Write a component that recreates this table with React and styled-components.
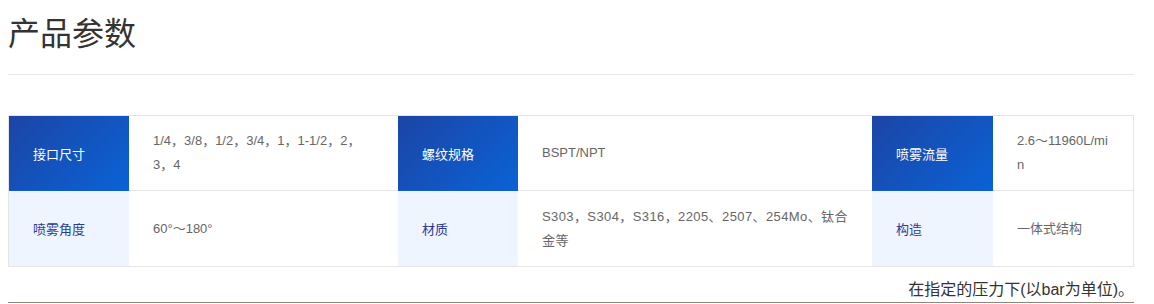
import React from "react";
import styled, { createGlobalStyle } from "styled-components";

const GlobalStyle = createGlobalStyle`
  body {
    margin: 0;
    background: #fff;
    font-family: "Liberation Sans", "Noto Sans CJK SC", sans-serif;
  }
`;

const rows = [
  [
    ["接口尺寸", "1/4，3/8，1/2，3/4，1，1-1/2，2，3，4"],
    ["螺纹规格", "BSPT/NPT"],
    ["喷雾流量", "2.6～11960L/min"],
  ],
  [
    ["喷雾角度", "60°～180°"],
    ["材质", "S303，S304，S316，2205、2507、254Mo、钛合金等", true],
    ["构造", "一体式结构"],
  ],
];

export default function App() {
  return (
    <Page>
      <GlobalStyle />
      <Title>产品参数</Title>
      <Table>
        {rows.map((row, r) =>
          row.map(([label, value, wide]) => (
            <React.Fragment key={label}>
              <Label $head={r === 0}>{label}</Label>
              <Value $wide={wide}>{value}</Value>
            </React.Fragment>
          ))
        )}
      </Table>
      <Note>在指定的压力下(以bar为单位)。</Note>
    </Page>
  );
}

const Page = styled.div`
  width: 1126px;
  margin: 0 8px;
`;

const Title = styled.h2`
  margin: 0;
  padding: 10px 0 16px;
  font-size: 32px;
  line-height: 48px;
  font-weight: normal;
  color: #333;
  border-bottom: 1px solid #e6e6e6;
`;

const Table = styled.div`
  display: grid;
  grid-template-columns: 120px 269px 120px 354px 121px 140px;
  grid-template-rows: 75px 76px;
  margin-top: 40px;
  border: 1px solid #e5e5e5;
  border-bottom: none;
`;

const Label = styled.div`
  display: flex;
  align-items: center;
  padding: 0 24px;
  font-size: 13px;
  color: ${(p) => (p.$head ? "#fff" : "#2d3a94")};
  background: ${(p) =>
    p.$head ? "linear-gradient(135deg, #1c45a5 0%, #0a62d6 100%)" : "#eef5ff"};
  border-bottom: 1px solid ${(p) => (p.$head ? "#0d5bcc" : "#e5e5e5")};
`;

const Value = styled.div`
  display: flex;
  align-items: center;
  padding: 0 24px;
  font-size: 13px;
  line-height: 24px;
  letter-spacing: ${(p) => (p.$wide ? "0.4px" : "0")};
  color: #666;
  word-break: break-all;
  border-bottom: 1px solid #e5e5e5;
`;

const Note = styled.div`
  margin-top: 11px;
  text-align: right;
  font-size: 16px;
  line-height: 24px;
  color: #333;
  border-bottom: 1px solid #8c867e;
`;
